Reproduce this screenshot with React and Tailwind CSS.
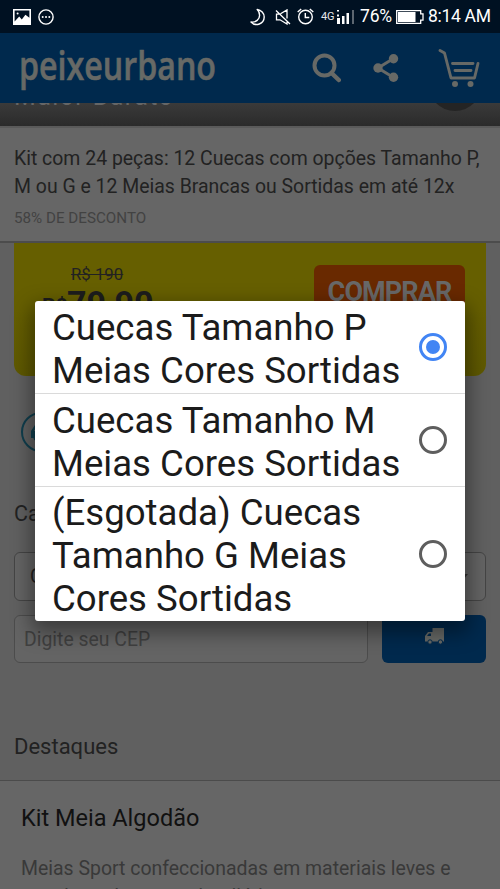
import React from "react";

const options = [
  { lines: ["Cuecas Tamanho P", "Meias Cores Sortidas"], checked: true, height: "h-[93px] border-b" },
  { lines: ["Cuecas Tamanho M", "Meias Cores Sortidas"], checked: false, height: "h-[93px] border-b" },
  { lines: ["(Esgotada) Cuecas", "Tamanho G Meias", "Cores Sortidas"], checked: false, height: "h-[134px]" },
];

function StatusBar() {
  return (
    <div className="flex h-[33px] shrink-0 items-center bg-[#001122] pl-[13px] text-white">
      <svg width="18" height="16" viewBox="0 0 18 16">
        <path d="M0 0h18v16H0z M1.6 1.6v11l4.6-5 2.6 2.8 3.6-4.6 4 3V1.6z" fill="#fff" fillRule="evenodd" />
        <circle cx="4.6" cy="4.4" r="1" fill="#fff" />
      </svg>
      <svg className="ml-[7px]" width="16" height="16" viewBox="0 0 16 16">
        <circle cx="8" cy="8" r="7.1" fill="none" stroke="#fff" strokeWidth="1.4" />
        <g fill="#fff"><circle cx="4.7" cy="8" r="1" /><circle cx="8" cy="8" r="1" /><circle cx="11.3" cy="8" r="1" /></g>
      </svg>
      <svg className="ml-[196px]" width="16" height="18" viewBox="0 0 16 18" fill="none" stroke="#fff" strokeWidth="1.4" strokeLinejoin="round">
        <path d="M7.2 1.5c4 .5 7 3.700 7 7.500a7.600 7.600 0 0 1-13.200 5c5 .6 8.600-2.600 8.600-6.700 0-2.400-.9-4.400-2.400-5.800z" />
      </svg>
      <svg className="ml-[9px]" width="16" height="16" viewBox="0 0 16 16" fill="none" stroke="#fff" strokeWidth="1.3">
        <path d="M1 1.500l14 13.500M5.500 4.800 12 .9v8.600M12 13v2L5 10.800H1.500V5.200h2.800" />
      </svg>
      <svg className="ml-[6px]" width="17" height="17" viewBox="0 0 17 17" fill="none" stroke="#fff" strokeWidth="1.4">
        <circle cx="8.500" cy="9" r="6.800" />
        <path d="M8.300 5v4.500h4M.7 4 4.200 1M16.300 4 12.800 1" />
      </svg>
      <span className="ml-[7px] w-[15px] font-[Roboto] text-[11px] leading-none tracking-[-0.2px] text-gray-200">4G</span>
      <svg className="ml-px" width="18" height="14" viewBox="0 0 18 14">
        <path d="M0 8h3v6H0zM5 6h2.500v8H5zM9.500 3H12v11H9.500zM0 4.500h2v2H0zM0 0h2v1.500H0z" fill="#fff" />
        <path d="M15 0h2v14h-2z" fill="#5c6670" />
      </svg>
      <span className="ml-[5px] w-[34px] font-[Roboto] text-[17.500px] leading-none tracking-[-0.2px]">76%</span>
      <svg className="ml-[2px]" width="28" height="14" viewBox="0 0 28 14">
        <path d="M.7.7h24v3.200h2.300v6.200h-2.300v3.200H.7z" fill="none" stroke="#fff" strokeWidth="1.3" />
        <path d="M2 2h17.500v10H2z" fill="#fff" />
      </svg>
      <span className="ml-[4px] whitespace-nowrap font-[Roboto] text-[17.500px] leading-none tracking-[-0.3px]">8:14 AM</span>
    </div>
  );
}

function Header() {
  return (
    <header className="flex h-[70px] shrink-0 items-center bg-[#00294d]">
      <svg className="ml-[19px]" width="200" height="70" viewBox="0 0 200 70">
        <text x="0" y="47" textLength="197" lengthAdjust="spacingAndGlyphs" fontFamily="Open Sans, sans-serif" fontWeight="600" fontSize="40" fill="#676966" stroke="#676966" strokeWidth="0.600">peixeurbano</text>
      </svg>
      <svg className="ml-[92px]" width="30" height="30" viewBox="0 0 30 30" fill="none" stroke="#676966">
        <circle cx="13.500" cy="12.500" r="10" strokeWidth="4" />
        <path d="M20.500 20l7.300 7" strokeWidth="4.500" strokeLinecap="round" />
      </svg>
      <svg className="ml-[32px]" width="26" height="28" viewBox="0 0 26 28" fill="#676966">
        <path d="M20.500 4.500 5 14l15.500 9.500" fill="none" stroke="#676966" strokeWidth="3" />
        <circle cx="20.500" cy="4.700" r="4.700" /><circle cx="5" cy="14" r="4.700" /><circle cx="20.500" cy="23.300" r="4.700" />
      </svg>
      <svg className="ml-[39px]" width="43" height="40" viewBox="0 0 43 40" fill="none" stroke="#676966" strokeWidth="2.900" strokeLinecap="round" strokeLinejoin="round">
        <path d="M2 2.500l4.500 2.500 6.500 25h23.500l3.500-14.500M14.500 15.500h20.500M17 22.500h16" />
        <g fill="#676966" stroke="none"><circle cx="17" cy="36" r="3" /><circle cx="32.500" cy="36" r="3" /></g>
      </svg>
    </header>
  );
}

function Radio({ checked }) {
  return (
    <span className={"flex size-7 shrink-0 items-center justify-center rounded-full border-[3px] " + (checked ? "border-[#4285f4]" : "border-[#5e5e5e]")}>
      {checked && <span className="size-[14px] rounded-full bg-[#4285f4]" />}
    </span>
  );
}

function OptionsDialog() {
  return (
    <div className="absolute top-[301px] left-[35px] w-[430px] overflow-hidden rounded-[3px] bg-white shadow-[0_8px_20px_4px_rgba(0,0,0,0.4)]">
      {options.map((o, i) => (
        <div key={i} className={"flex items-center justify-between border-[#dadada] pr-[18px] pl-[17px] " + o.height}>
          <div className="pt-[5px] font-[Roboto] text-[36.600px] leading-[42.700px] whitespace-nowrap text-[#1b1b1b]">
            {o.lines.map((l) => <div key={l}>{l}</div>)}
          </div>
          <Radio checked={o.checked} />
        </div>
      ))}
    </div>
  );
}

export default function App() {
  return (
    <div className="relative flex h-[889px] w-[500px] flex-col overflow-hidden bg-[#606060] font-[Roboto] text-[#222]">
      <StatusBar />
      <Header />

      <div className="relative h-[23px] shrink-0 overflow-hidden bg-linear-to-b from-[#3a3a3a] to-[#2b2b2b]">
        <div className="absolute top-[-20px] left-[14px] font-[Roboto] text-[25px] leading-[28px] tracking-[1.4px] text-[#666]">Maior Barato</div>
        <div className="absolute top-[-46px] left-[428px] size-[54px] rounded-full bg-[#242424]" />
      </div>

      <section className="h-[117px] shrink-0 border-t-2 border-b-2 border-t-[#5a5a5a] border-b-[#4c4c4c] bg-[#666] pt-[17px] pl-[14px] whitespace-nowrap">
        <h1 className="text-[19.450px] leading-[28px]">
          <div>Kit com 24 peças: 12 Cuecas com opções Tamanho P,</div>
          <div>M ou G e 12 Meias Brancas ou Sortidas em até 12x</div>
        </h1>
        <p className="mt-[7px] text-[15.200px] leading-[20px] text-[#424242]">58% DE DESCONTO</p>
      </section>

      <div className="mx-[14px] flex h-[133px] shrink-0 justify-between rounded-b-xl bg-linear-to-b from-[#665f00] via-[#665f00] to-[#5e5800] pr-[21px]">
        <div className="pt-[21px] pl-[28px] whitespace-nowrap">
          <div className="ml-[29px] text-[16.800px] leading-[20px] line-through">R$ 190</div>
          <div className="mt-[-2px] flex items-start font-bold text-[#1d1d1d]">
            <span className="w-[25px] pt-[8px] text-[21px] leading-[32px]">R$</span><span className="text-[34px] leading-[42px]">79,90</span>
          </div>
        </div>
        <div className="mt-[22px] h-[56px] w-[151px] rounded-md bg-[#692900] pt-[9px] text-center text-[27px] leading-[36px] font-bold tracking-[-0.9px] text-[#686868]">COMPRAR</div>
      </div>

      <div className="mt-[36px] ml-[21px] flex size-[40px] shrink-0 items-center rounded-full border-2 border-[#103e4d] pl-[6px]">
        <svg width="24" height="24" viewBox="0 0 24 24" fill="#103e4d">
          <path fillRule="evenodd" d="M2 18v-7l4-6h12l4 6v7zM5 11h5V7H7.500z" /><circle cx="7" cy="18" r="2.500" />
        </svg>
      </div>

      <div className="mt-[50px] ml-[14px] text-[21.500px] leading-[24px]">Calcular frete</div>
      <div className="mx-[14px] mt-[26px] flex h-[49px] shrink-0 items-center justify-between rounded-md border border-[#454545] bg-[#646464] pr-[17px] pl-[15px] text-[19.400px]">
        <span>Cuecas Tamanho P</span>
        <svg width="10" height="6" viewBox="0 0 10 6"><path d="M0 0h10L5 6z" fill="#333" /></svg>
      </div>
      <div className="mx-[14px] mt-[14px] flex h-[48px] shrink-0 gap-[14px]">
        <div className="flex w-[354px] items-center rounded-md border border-[#4c4c4c] bg-[#646464] pt-px pl-[9px] text-[19.400px] text-[#404040]">Digite seu CEP</div>
        <div className="flex w-[104px] items-center justify-center rounded-md bg-[#00294d] pb-[5px]">
          <svg width="19" height="17" viewBox="0 0 19 17">
            <path fill="#676966" fillRule="evenodd" d="M7.500 0H19v13.500h-1a2.700 2.700 0 0 1-5.200 0H7.500a2.700 2.700 0 0 1-5.200 0H0V8l3-4h4.500zM2 8h4V5.500H4z" />
            <g fill="#676966" stroke="#00294d"><circle cx="5" cy="14" r="2.200" /><circle cx="15.400" cy="14" r="2.200" /></g>
          </svg>
        </div>
      </div>

      <h2 className="mt-[72px] ml-[14px] text-[22px] leading-[24px]">Destaques</h2>
      <section className="mt-[21px] h-[109px] shrink-0 border-t border-[#4b4b4b] bg-[#666] pt-[22px] pl-[21px] whitespace-nowrap">
        <h3 className="text-[23.500px] leading-[30px] text-[#111]">Kit Meia Algodão</h3>
        <div className="mt-[22px] text-[19.450px] leading-[28px] text-[#393939]">
          <div>Meias Sport confeccionadas em materiais leves e</div>
          <div>com bom desempenho diário</div>
        </div>
      </section>

      <OptionsDialog />
    </div>
  );
}
